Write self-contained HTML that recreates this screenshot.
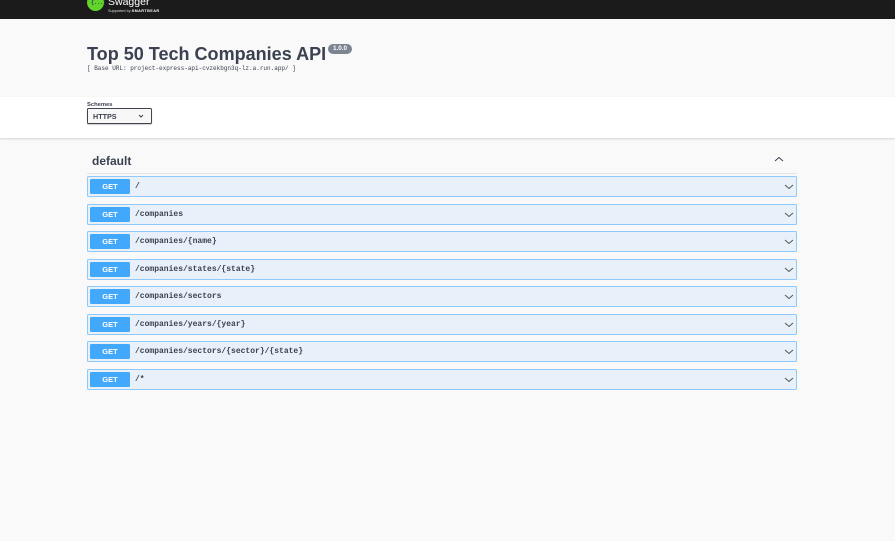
<!DOCTYPE html>
<html><head><meta charset="utf-8"><style>
html,body{margin:0;padding:0}
body{width:895px;height:541px;overflow:hidden;background:#f9f9f9;position:relative;font-family:"Liberation Sans",sans-serif;color:#3b4151}
div,span,svg{position:absolute}
.t{white-space:nowrap;filter:blur(.25px)}
.row{left:87px;width:708px;height:19px;background:#e8f1f9;border:1px solid #8fc9fb;border-radius:1.5px}
.btn{left:2px;top:2px;width:40px;height:15px;background:#42a8fb;border-radius:1.5px;color:#fff;font-weight:bold;font-size:7.5px;line-height:15px;text-align:center}
.path{left:47px;top:0;line-height:20px;font-family:"Liberation Mono",monospace;font-weight:bold;font-size:8px;color:#3b4151;white-space:nowrap;filter:blur(.25px)}
.chev{left:696px;top:6px}
</style></head><body>
<div style="left:0;top:0;width:895px;height:19px;background:#1b1b1b"></div>
<div style="left:87px;top:-6px;width:17px;height:17px;border-radius:50%;background:#62d32a"></div>
<div class="t" style="left:91px;top:-1px;font-family:'Liberation Mono',monospace;font-weight:bold;font-size:5px;line-height:8px;color:#173646">{...}</div>
<div class="t" style="left:108px;top:-4px;font-size:10.5px;line-height:13px;color:#fff">Swagger</div>
<div class="t" style="left:108px;top:9px;font-size:3.8px;line-height:5px;color:#ddd">Supported by <b style="letter-spacing:.4px;color:#fff">SMARTBEAR</b></div>

<div class="t" style="left:87px;top:42px;font-size:18.05px;line-height:24px;font-weight:bold;color:#3b4151">Top 50 Tech Companies API</div>
<div class="t" style="left:328px;top:44px;width:24px;height:10px;background:#7d8492;border-radius:5px;color:#fff;font-size:6.3px;font-weight:bold;line-height:10px;text-align:center">1.0.0</div>
<div class="t" style="left:87px;top:65px;font-family:'Liberation Mono',monospace;font-size:6px;line-height:8px;color:#3b4151">[ Base URL: project-express-api-cvzekbgn3q-lz.a.run.app/ ]</div>

<div style="left:0;top:97px;width:895px;height:41px;background:#fff;box-shadow:0 1px 2px rgba(0,0,0,.15)"></div>
<div class="t" style="left:87px;top:102px;font-size:5.8px;line-height:7px;font-weight:bold;color:#3b4151">Schemes</div>
<div style="left:87px;top:108px;width:63px;height:14px;border:1px solid #41444e;border-radius:1.5px;background:#f7f7f7;box-shadow:0 1px 1px rgba(0,0,0,.2)"></div>
<div class="t" style="left:93px;top:112px;font-size:7.2px;line-height:9px;font-weight:bold;color:#3b4151">HTTPS</div>
<svg style="left:138px;top:114px" width="6" height="4" viewBox="0 0 6 4"><path d="M1 1 L3 3 L5 1" fill="none" stroke="#3b4151" stroke-width="1"/></svg>

<div class="t" style="left:92px;top:154px;font-size:12px;line-height:15px;font-weight:bold;color:#3b4151">default</div>
<svg style="left:774px;top:156px" width="10" height="7" viewBox="0 0 10 7"><path d="M1 5 L5 1.5 L9 5" fill="none" stroke="#3b4151" stroke-width="1"/></svg>
<div style="left:87px;top:173px;width:710px;height:1px;background:#e2e3e4"></div>

<div class="row" style="top:176px"><div class="btn">GET</div><div class="path">/</div><svg class="chev" width="10" height="8" viewBox="0 0 10 8"><path d="M1 2 L5 5.5 L9 2" fill="none" stroke="#555" stroke-width="1"/></svg></div>
<div class="row" style="top:204px"><div class="btn">GET</div><div class="path">/companies</div><svg class="chev" width="10" height="8" viewBox="0 0 10 8"><path d="M1 2 L5 5.5 L9 2" fill="none" stroke="#555" stroke-width="1"/></svg></div>
<div class="row" style="top:231px"><div class="btn">GET</div><div class="path">/companies/{name}</div><svg class="chev" width="10" height="8" viewBox="0 0 10 8"><path d="M1 2 L5 5.5 L9 2" fill="none" stroke="#555" stroke-width="1"/></svg></div>
<div class="row" style="top:259px"><div class="btn">GET</div><div class="path">/companies/states/{state}</div><svg class="chev" width="10" height="8" viewBox="0 0 10 8"><path d="M1 2 L5 5.5 L9 2" fill="none" stroke="#555" stroke-width="1"/></svg></div>
<div class="row" style="top:286px"><div class="btn">GET</div><div class="path">/companies/sectors</div><svg class="chev" width="10" height="8" viewBox="0 0 10 8"><path d="M1 2 L5 5.5 L9 2" fill="none" stroke="#555" stroke-width="1"/></svg></div>
<div class="row" style="top:314px"><div class="btn">GET</div><div class="path">/companies/years/{year}</div><svg class="chev" width="10" height="8" viewBox="0 0 10 8"><path d="M1 2 L5 5.5 L9 2" fill="none" stroke="#555" stroke-width="1"/></svg></div>
<div class="row" style="top:341px"><div class="btn">GET</div><div class="path">/companies/sectors/{sector}/{state}</div><svg class="chev" width="10" height="8" viewBox="0 0 10 8"><path d="M1 2 L5 5.5 L9 2" fill="none" stroke="#555" stroke-width="1"/></svg></div>
<div class="row" style="top:369px"><div class="btn">GET</div><div class="path">/*</div><svg class="chev" width="10" height="8" viewBox="0 0 10 8"><path d="M1 2 L5 5.5 L9 2" fill="none" stroke="#555" stroke-width="1"/></svg></div>
</body></html>
